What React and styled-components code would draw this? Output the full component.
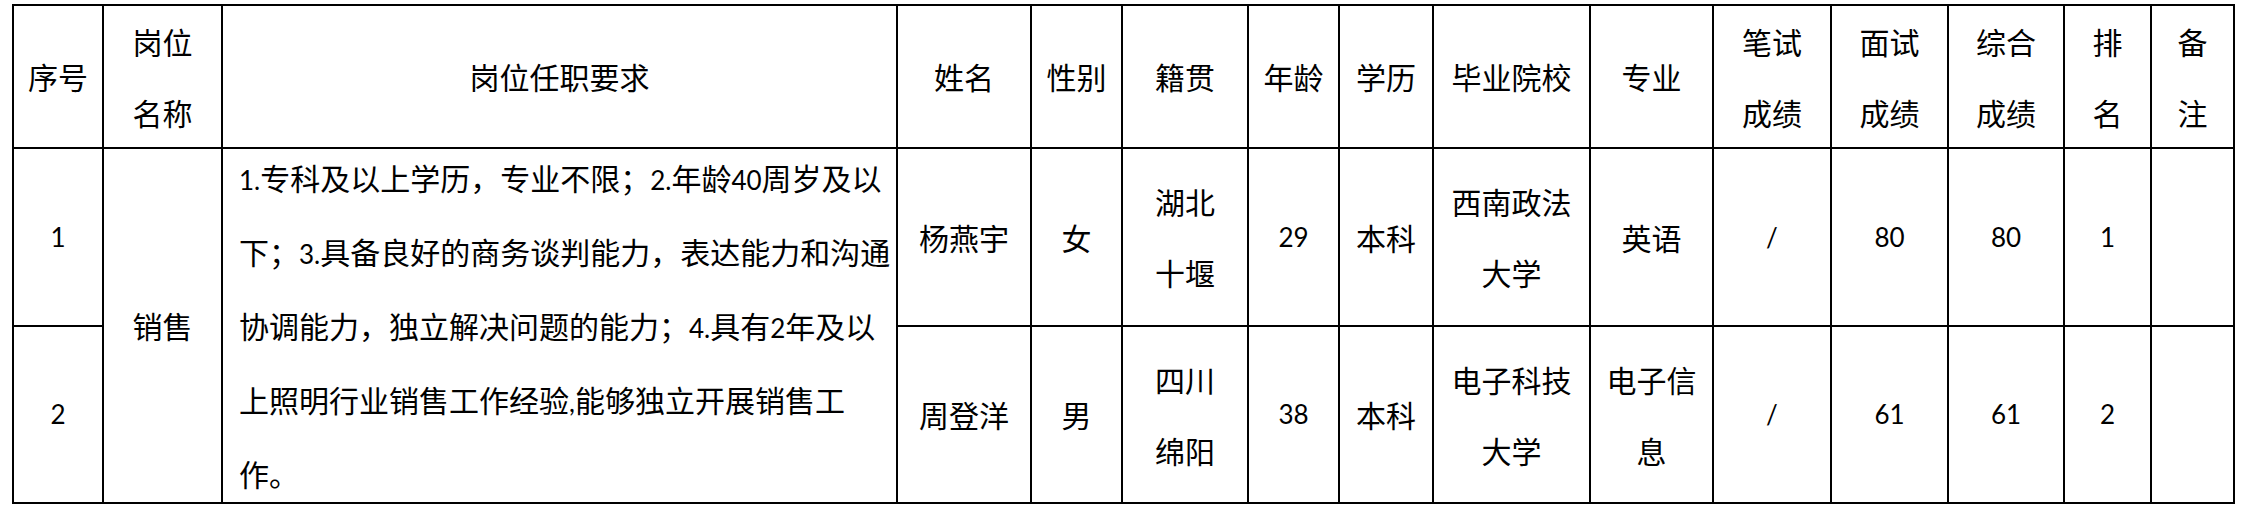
import React from 'react';
import styled, { createGlobalStyle } from 'styled-components';

const Global = createGlobalStyle`
  html, body { margin: 0; padding: 0; background: #fff; }
  body { font-family: "Noto Sans CJK SC", sans-serif; color: #000; }
`;

const Page = styled.div`
  padding: 4px 0 0 12px;
`;

const Grid = styled.div`
  display: grid;
  width: max-content;
  grid-template-columns: 88px 117px 673px 132px 89px 124px 89px 92px 155px 121px 116px 115px 114px 85px 81px;
  grid-template-rows: 141px 176px 175px;
  gap: 2px;
  padding: 2px;
  background: #000;
`;

const Cell = styled.div`
  background: #fff;
  display: flex;
  flex-direction: column;
  justify-content: center;
  align-items: ${(p) => (p.$left ? 'flex-start' : 'center')};
  text-align: ${(p) => (p.$left ? 'left' : 'center')};
  padding-left: ${(p) => (p.$left ? '16px' : '0')};
  grid-row: ${(p) => (p.$rows ? `span ${p.$rows}` : 'auto')};
  font-family: ${(p) => (p.$num ? '"Lato", "Noto Sans CJK SC", sans-serif' : '"Noto Sans CJK SC", sans-serif')};
  font-size: ${(p) => (p.$num ? '26px' : '30px')};
  line-height: 71px;
  white-space: nowrap;
  overflow: visible;
  min-width: 0;
`;

const Line = styled.span`
  display: block;
`;

const Num = styled.span`
  font-family: "Lato", sans-serif;
  font-size: 26px;
`;

const header = [
  ['序号'],
  ['岗位', '名称'],
  ['岗位任职要求'],
  ['姓名'],
  ['性别'],
  ['籍贯'],
  ['年龄'],
  ['学历'],
  ['毕业院校'],
  ['专业'],
  ['笔试', '成绩'],
  ['面试', '成绩'],
  ['综合', '成绩'],
  ['排', '名'],
  ['备', '注'],
];

const people = [
  {
    no: '1',
    name: ['杨燕宇'],
    sex: ['女'],
    origin: ['湖北', '十堰'],
    age: '29',
    edu: ['本科'],
    school: ['西南政法', '大学'],
    major: ['英语'],
    written: '/',
    interview: '80',
    total: '80',
    rank: '1',
  },
  {
    no: '2',
    name: ['周登洋'],
    sex: ['男'],
    origin: ['四川', '绵阳'],
    age: '38',
    edu: ['本科'],
    school: ['电子科技', '大学'],
    major: ['电子信', '息'],
    written: '/',
    interview: '61',
    total: '61',
    rank: '2',
  },
];

const Lines = ({ lines }) => lines.map((l, i) => <Line key={i}>{l}</Line>);

const Requirements = () => (
  <Cell $left $rows={2}>
    <Line>
      <Num>1.</Num>专科及以上学历，专业不限；<Num>2.</Num>年龄<Num>40</Num>周岁及以
    </Line>
    <Line>
      下；<Num>3.</Num>具备良好的商务谈判能力，表达能力和沟通
    </Line>
    <Line>
      协调能力，独立解决问题的能力；<Num>4.</Num>具有<Num>2</Num>年及以
    </Line>
    <Line>
      上照明行业销售工作经验<Num>,</Num>能够独立开展销售工
    </Line>
    <Line>作。</Line>
  </Cell>
);

const PersonCells = ({ p }) => (
  <>
    <Cell><Lines lines={p.name} /></Cell>
    <Cell><Lines lines={p.sex} /></Cell>
    <Cell><Lines lines={p.origin} /></Cell>
    <Cell $num>{p.age}</Cell>
    <Cell><Lines lines={p.edu} /></Cell>
    <Cell><Lines lines={p.school} /></Cell>
    <Cell><Lines lines={p.major} /></Cell>
    <Cell $num>{p.written}</Cell>
    <Cell $num>{p.interview}</Cell>
    <Cell $num>{p.total}</Cell>
    <Cell $num>{p.rank}</Cell>
    <Cell />
  </>
);

export default function App() {
  return (
    <>
      <Global />
      <Page>
        <Grid>
          {header.map((h, i) => (
            <Cell key={i}>
              <Lines lines={h} />
            </Cell>
          ))}
          <Cell $num>{people[0].no}</Cell>
          <Cell $rows={2}>销售</Cell>
          <Requirements />
          <PersonCells p={people[0]} />
          <Cell $num>{people[1].no}</Cell>
          <PersonCells p={people[1]} />
        </Grid>
      </Page>
    </>
  );
}
